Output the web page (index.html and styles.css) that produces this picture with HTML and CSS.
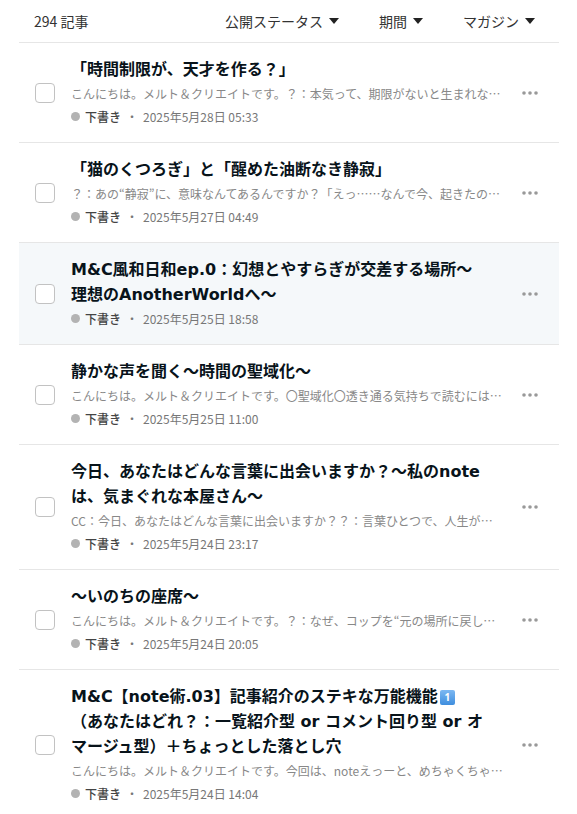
FILE: index.html
```html
<!DOCTYPE html>
<html lang="ja">
<head>
  <meta charset="UTF-8">
  <meta name="viewport" content="width=device-width, initial-scale=1.0">
  <title>記事一覧</title>
  <link rel="stylesheet" href="styles.css">
</head>
<body>

  <div class="note-list">
    <div class="list-head">
      <span class="count">294 記事</span>
      <div class="filters">
        <button class="filter">公開ステータス<span class="caret"></span></button>
        <button class="filter">期間<span class="caret"></span></button>
        <button class="filter">マガジン<span class="caret"></span></button>
      </div>
    </div>

    <!-- 記事ごとの行：チェックボックス / 本文 / メニュー -->
    <div class="article">
      <span class="check"></span>
      <div class="article-body">
        <h3 class="title">「時間制限が、天才を作る？」</h3>
        <p class="excerpt">こんにちは。メルト＆クリエイトです。？：本気って、期限がないと生まれないものなんですか？</p>
        <p class="meta"><span class="dot"></span><span class="status">下書き</span><span class="sep">・</span>2025年5月28日 05:33</p>
      </div>
      <button class="more"><svg width="16" height="4" viewBox="0 0 16 4"><circle cx="2" cy="2" r="1.8"/><circle cx="8" cy="2" r="1.8"/><circle cx="14" cy="2" r="1.8"/></svg></button>
    </div>

    <div class="article">
      <span class="check"></span>
      <div class="article-body">
        <h3 class="title">「猫のくつろぎ」と「醒めた油断なき静寂」</h3>
        <p class="excerpt">？：あの“静寂”に、意味なんてあるんですか？「えっ……なんで今、起きたの？」</p>
        <p class="meta"><span class="dot"></span><span class="status">下書き</span><span class="sep">・</span>2025年5月27日 04:49</p>
      </div>
      <button class="more"><svg width="16" height="4" viewBox="0 0 16 4"><circle cx="2" cy="2" r="1.8"/><circle cx="8" cy="2" r="1.8"/><circle cx="14" cy="2" r="1.8"/></svg></button>
    </div>

    <div class="article is-hover">
      <span class="check"></span>
      <div class="article-body">
        <h3 class="title">M&amp;C風和日和ep.0：幻想とやすらぎが交差する場所〜理想のAnotherWorldへ〜</h3>
        <p class="meta"><span class="dot"></span><span class="status">下書き</span><span class="sep">・</span>2025年5月25日 18:58</p>
      </div>
      <button class="more"><svg width="16" height="4" viewBox="0 0 16 4"><circle cx="2" cy="2" r="1.8"/><circle cx="8" cy="2" r="1.8"/><circle cx="14" cy="2" r="1.8"/></svg></button>
    </div>

    <div class="article">
      <span class="check"></span>
      <div class="article-body">
        <h3 class="title">静かな声を聞く〜時間の聖域化〜</h3>
        <p class="excerpt">こんにちは。メルト＆クリエイトです。〇聖域化〇透き通る気持ちで読むにはどうしたらいいのか</p>
        <p class="meta"><span class="dot"></span><span class="status">下書き</span><span class="sep">・</span>2025年5月25日 11:00</p>
      </div>
      <button class="more"><svg width="16" height="4" viewBox="0 0 16 4"><circle cx="2" cy="2" r="1.8"/><circle cx="8" cy="2" r="1.8"/><circle cx="14" cy="2" r="1.8"/></svg></button>
    </div>

    <div class="article">
      <span class="check"></span>
      <div class="article-body">
        <h3 class="title">今日、あなたはどんな言葉に出会いますか？〜私のnoteは、気まぐれな本屋さん〜</h3>
        <p class="excerpt">CC：今日、あなたはどんな言葉に出会いますか？？：言葉ひとつで、人生が変わることってあるんですか？</p>
        <p class="meta"><span class="dot"></span><span class="status">下書き</span><span class="sep">・</span>2025年5月24日 23:17</p>
      </div>
      <button class="more"><svg width="16" height="4" viewBox="0 0 16 4"><circle cx="2" cy="2" r="1.8"/><circle cx="8" cy="2" r="1.8"/><circle cx="14" cy="2" r="1.8"/></svg></button>
    </div>

    <div class="article">
      <span class="check"></span>
      <div class="article-body">
        <h3 class="title">〜いのちの座席〜</h3>
        <p class="excerpt">こんにちは。メルト＆クリエイトです。？：なぜ、コップを“元の場所に戻して”しまうんですか？</p>
        <p class="meta"><span class="dot"></span><span class="status">下書き</span><span class="sep">・</span>2025年5月24日 20:05</p>
      </div>
      <button class="more"><svg width="16" height="4" viewBox="0 0 16 4"><circle cx="2" cy="2" r="1.8"/><circle cx="8" cy="2" r="1.8"/><circle cx="14" cy="2" r="1.8"/></svg></button>
    </div>

    <div class="article">
      <span class="check"></span>
      <div class="article-body">
        <h3 class="title">M&amp;C【note術.03】記事紹介のステキな万能機能<span class="keycap">1</span><br>（あなたはどれ？：一覧紹介型 or コメント回り型 or オマージュ型）＋ちょっとした落とし穴</h3>
        <p class="excerpt">こんにちは。メルト＆クリエイトです。今回は、noteえっーと、めちゃくちゃ便利な機能の話です。</p>
        <p class="meta"><span class="dot"></span><span class="status">下書き</span><span class="sep">・</span>2025年5月24日 14:04</p>
      </div>
      <button class="more"><svg width="16" height="4" viewBox="0 0 16 4"><circle cx="2" cy="2" r="1.8"/><circle cx="8" cy="2" r="1.8"/><circle cx="14" cy="2" r="1.8"/></svg></button>
    </div>
  </div>

</body>
</html>
```

FILE: styles.css
```css
body {
  margin: 0;
  font-family: "Noto Sans CJK JP", "Noto Sans", sans-serif;
  color: #08131a;
  background: #fff;
}

.note-list {
  margin: 0 18px 0 19px;
}

/* 件数とフィルター */
.list-head {
  display: flex;
  align-items: center;
  justify-content: space-between;
  height: 42px;
  padding: 0 24px 0 15px;
  border-bottom: 1px solid #e6e6e6;
  font-size: 14px;
  color: #333;
}

.filters {
  display: flex;
  gap: 40px;
}

.filter {
  display: flex;
  align-items: center;
  gap: 6px;
  padding: 0;
  border: none;
  background: none;
  font: inherit;
  color: #333;
}

.caret {
  width: 0;
  height: 0;
  border-left: 5px solid transparent;
  border-right: 5px solid transparent;
  border-top: 6px solid #222;
}

/* 記事の行 */
.article {
  display: flex;
  align-items: center;
  padding: 14px 13px 14px 16px;
  border-bottom: 1px solid #e6e6e6;
}

.article.is-hover {
  background-color: #f5f8fa;
}

.check {
  flex: none;
  width: 18px;
  height: 18px;
  border: 1px solid #c2c2c2;
  border-radius: 4px;
  background: #fff;
}

.article-body {
  flex: 1;
  min-width: 0;
  margin: 0 10px 0 16px;
}

.title {
  margin: 0;
  padding-right: 19px;
  font-family: "DejaVu Sans", "Noto Sans CJK JP", sans-serif;
  font-size: 16px;
  font-weight: 700;
  line-height: 25px;
  color: #08131a;
}

.keycap {
  display: inline-block;
  width: 15px;
  height: 15px;
  margin: 0 2px;
  border-radius: 2px;
  background: linear-gradient(#7cb8f2, #3f8ede);
  color: #fff;
  font-family: "Noto Sans", sans-serif;
  font-size: 10px;
  line-height: 15px;
  text-align: center;
  vertical-align: 1px;
}

.excerpt {
  margin: 0;
  font-size: 12px;
  line-height: 23px;
  color: #888;
  white-space: nowrap;
  overflow: hidden;
  text-overflow: ellipsis;
}

.meta {
  display: flex;
  align-items: center;
  margin: 0;
  font-size: 12px;
  line-height: 23px;
  color: #777;
}

.dot {
  width: 9px;
  height: 9px;
  margin-right: 5px;
  border-radius: 50%;
  background: #b3b3b3;
}

.status {
  font-weight: 500;
  color: #444;
}

.sep {
  margin: 0 5px;
}

.more {
  flex: none;
  width: 32px;
  height: 32px;
  padding: 0;
  border: none;
  background: none;
  display: flex;
  align-items: center;
  justify-content: center;
}

.more svg {
  fill: #999;
}
```
